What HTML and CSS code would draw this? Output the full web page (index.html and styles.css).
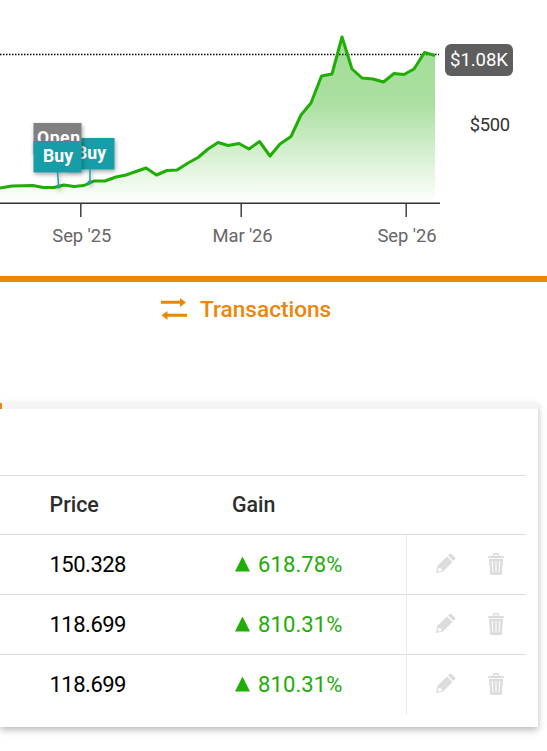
FILE: index.html
```html
<!DOCTYPE html>
<html lang="en">
<head>
<meta charset="utf-8">
<title>Transactions</title>
<link rel="stylesheet" href="styles.css">
</head>
<body>
<svg class="defs" width="0" height="0" aria-hidden="true">
  <symbol id="pencil" viewBox="0 0 20 20">
    <path d="M13.3 1.2Q14.5 0 15.7 1.2L18.8 4.3Q20 5.5 18.8 6.7L17.5 8L12 2.5Z"/>
    <path fill-rule="evenodd" d="M11 3.5L16.5 9L7 18.4L0 20L1.4 12.8ZM2.6 14.1L1.8 17.4L3 18.4L5.8 17.6L5.4 15.5L3.2 15.2Z"/>
  </symbol>
  <symbol id="trash" viewBox="0 0 16 22">
    <path fill-rule="evenodd" d="M5 3V1.2Q5 0 6.2 0H9.8Q11 0 11 1.2V3H15Q16 3 16 4V5H0V4Q0 3 1 3ZM6.4 3H9.6V1.5H6.4Z"/>
    <path fill-rule="evenodd" d="M1 5.8H15L13.9 20.4Q13.8 22 12.3 22H3.7Q2.2 22 2.1 20.4ZM3.6 8L4.5 19.6H5.4L4.8 8ZM7.5 8V19.6H8.5V8ZM11.2 8L10.6 19.6H11.5L12.4 8Z"/>
  </symbol>
</svg>

<section class="chart">
  <svg width="547" height="276" viewBox="0 0 547 276">
    <defs>
      <linearGradient id="area" gradientUnits="userSpaceOnUse" x1="0" y1="36" x2="0" y2="203">
        <stop offset="0" stop-color="#20ad05" stop-opacity=".42"/>
        <stop offset=".4" stop-color="#20ad05" stop-opacity=".38"/>
        <stop offset="1" stop-color="#20ad05" stop-opacity="0"/>
      </linearGradient>
      <filter id="shadow" x="-30%" y="-30%" width="170%" height="180%">
        <feDropShadow dx="1" dy="2" stdDeviation="2" flood-opacity=".35"/>
      </filter>
    </defs>
    <path fill="url(#area)" d="M0 188L12 186L33 185.5L43 187.5H54L64 185L74 186.5L84 185.5L94 181H105L116 177L126 175L146 168L156.5 175L167 170.5L177 170L188 163L198 157.5L208 149L218 142.5L228 145.5L239 143.5L249 149L259.5 141.5L270 156L280 144L291 136.5L301 115L311 103L321.5 76L332 74L342 37L352 69L362 78L373 79L383.5 82L394 73.5L404 74.5L414 69L424.5 52.5L435 55.5V203H0Z"/>
    <path class="limit" d="M0 54.5H439"/>
    <path class="trend" d="M0 188L12 186L33 185.5L43 187.5H54L64 185L74 186.5L84 185.5L94 181H105L116 177L126 175L146 168L156.5 175L167 170.5L177 170L188 163L198 157.5L208 149L218 142.5L228 145.5L239 143.5L249 149L259.5 141.5L270 156L280 144L291 136.5L301 115L311 103L321.5 76L332 74L342 37L352 69L362 78L373 79L383.5 82L394 73.5L404 74.5L414 69L424.5 52.5L435 55.5"/>
    <path class="axis" d="M0 203.2H440M80.8 203V217M241.2 203V217M406.2 203V217"/>
    <g class="axis-label">
      <text x="52.3" y="242" textLength="59">Sep '25</text>
      <text x="212.6" y="242" textLength="60">Mar '26</text>
      <text x="377.5" y="242" textLength="59">Sep '26</text>
      <text class="value" x="469.7" y="131" textLength="40.5">$500</text>
    </g>
    <rect class="badge" x="445" y="44" width="68" height="32" rx="6"/>
    <text class="badge-text" x="450" y="66" textLength="58">$1.08K</text>
    <g class="flag">
      <g filter="url(#shadow)"><path d="M90 168V182" class="stem"/><circle cx="89.5" cy="182.5" r="2"/><rect x="67" y="138" width="47.5" height="31.5"/></g>
      <text x="76" y="159" textLength="30">Buy</text>
      <g filter="url(#shadow)"><rect class="open" x="33.5" y="123" width="48" height="31"/></g>
      <text x="37" y="144" textLength="43">Open</text>
      <g filter="url(#shadow)"><path d="M57.5 170L58.5 185" class="stem"/><circle cx="58.5" cy="186.5" r="2"/><rect x="33.5" y="141" width="48" height="31.5"/></g>
      <text x="43" y="162" textLength="30">Buy</text>
    </g>
  </svg>
</section>

<h2 class="heading">
  <svg width="26" height="22" viewBox="0 0 26 22"><path d="M0 2.8H19V0L25 4.4L19 9V5.8H0ZM26 18.8V15.8H6.5V13L.5 17.3L6.5 22V18.8Z"/></svg>
  <span>Transactions</span>
</h2>

<section class="card">
  <div class="tabs"><div class="active-tab"></div></div>
  <div class="table">
    <div class="row head"><div class="price">Price</div><div class="gain">Gain</div></div>
    <div class="row"><div class="price">150.328</div><div class="gain up"><i></i>618.78%</div>
      <div class="actions"><svg class="pencil"><use href="#pencil"/></svg><svg class="trash"><use href="#trash"/></svg></div></div>
    <div class="row"><div class="price">118.699</div><div class="gain up"><i></i>810.31%</div>
      <div class="actions"><svg class="pencil"><use href="#pencil"/></svg><svg class="trash"><use href="#trash"/></svg></div></div>
    <div class="row"><div class="price">118.699</div><div class="gain up"><i></i>810.31%</div>
      <div class="actions"><svg class="pencil"><use href="#pencil"/></svg><svg class="trash"><use href="#trash"/></svg></div></div>
  </div>
</section>
</body>
</html>
```
FILE: styles.css
```css
* { box-sizing: border-box; }
body {
  margin: 0;
  height: 751px;
  overflow: hidden;
  background: #fff;
  font-family: Roboto, "Liberation Sans", sans-serif;
  font-size: 22px;
  color: #000;
}
svg { display: block; flex: none; }
.defs { display: none; }
.chart { height: 282px; border-bottom: 6px solid #ed8607; }
.trend { fill: none; stroke: #20ad05; stroke-width: 3; stroke-linejoin: round; }
.limit { stroke: #000; stroke-width: 1.4; stroke-dasharray: 1.5 1.5; }
.axis { fill: none; stroke: #333; stroke-width: 1.4; }
.axis-label { font-size: 18.4px; fill: #666; }
.axis-label .value { fill: #333; }
.badge { fill: #5e5e5e; }
.badge-text { font-size: 18.6px; fill: #fff; }
.flag { font-size: 17.6px; font-weight: 700; fill: #189da8; }
.flag text { fill: #fff; }
.flag .open { fill: #808080; }
.stem { stroke: #189da8; stroke-width: 1.5; }

.heading {
  display: flex;
  align-items: center;
  gap: 13px;
  height: 54px;
  margin: 0 0 67px;
  padding-left: 161px;
  color: #ed8607;
  font-size: 22.6px;
  font-weight: 500;
}
.heading svg { fill: currentColor; }

.card {
  width: 538px;
  height: 324px;
  background: #fff;
  box-shadow: 0 3px 7px rgba(0, 0, 0, .28);
}
.tabs { height: 6px; background: #f4f4f4; }
.active-tab { width: 2px; height: 6px; background: #ed8607; }
.table { width: 526px; padding-top: 66px; }
.row {
  display: grid;
  grid-template-columns: 232px 174px 120px;
  height: 60px;
  border-top: 1px solid #dcdcdc;
  line-height: 60px;
}
.row.head { height: 59px; line-height: 57px; font-weight: 500; color: #2d2d2d; font-size: 21.4px; }
.price { padding-left: 49.5px; letter-spacing: -.5px; }
.head .price { letter-spacing: 0; }
.up { display: flex; align-items: center; padding-left: 3px; color: #20ad05; letter-spacing: .1px; }
.up i {
  width: 15px;
  height: 15px;
  margin: -2px 8px 0 0;
  background: currentColor;
  clip-path: polygon(50% 0, 100% 100%, 0 100%);
}
.actions {
  display: flex;
  align-items: center;
  gap: 32px;
  padding-left: 29px;
  border-left: 1px solid #eaeaea;
  fill: #dcdcdc;
}
.pencil { width: 20px; height: 20px; margin-top: -5px; }
.trash { width: 16px; height: 22px; margin-top: -2px; }
```
